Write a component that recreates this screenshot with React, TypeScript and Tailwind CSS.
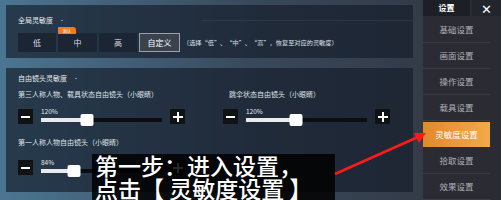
import React from "react";

const FONT = { fontFamily: '"Noto Sans CJK SC", "Noto Sans", sans-serif' };

function Slider({ value, ratio }: { value: string; ratio: number }) {
  return (
    <div className="flex h-[15px] items-center gap-[8px]">
      <div className="flex h-[15px] w-[15px] items-center justify-center bg-[#111214]">
        <div className="h-[2px] w-[9px] bg-white" />
      </div>
      <div className="relative h-[15px] w-[121px]">
        <span className="absolute -top-[2px] left-0 text-[6.5px] leading-[8px] text-[#e6e8ea]">{value}</span>
        <div className="absolute top-[9px] left-0 h-[4px] w-full bg-[#0c0d10]">
          <div className="h-full bg-[#e9eaec]" style={{ width: `${ratio * 100}%` }} />
        </div>
        <div
          className="absolute top-[5px] h-[12px] w-[13px] -translate-x-1/2 rounded-[2px] bg-white"
          style={{ left: `${ratio * 100}%` }}
        />
      </div>
      <div className="relative flex h-[15px] w-[15px] items-center justify-center bg-[#111214]">
        <div className="h-[2px] w-[10px] bg-white" />
        <div className="absolute h-[10px] w-[2px] bg-white" />
      </div>
    </div>
  );
}

const sideItems = ["基础设置", "画面设置", "操作设置", "载具设置", "灵敏度设置", "拾取设置", "效果设置"];

export default function App() {
  return (
    <div
      className="relative flex h-[200px] w-[501px] overflow-hidden bg-linear-to-r from-[#4b7691] via-[#38495c] to-[#31343f]"
      style={FONT}
    >
      {/* main content */}
      <div className="flex w-[423px] flex-col gap-[10px] pt-[5px] pl-[6px]">
        <div className="relative h-[53px] w-[407px] bg-[#141c29]/65 pt-[11px] pl-[12px]">
          <div className="flex items-center gap-[8px]">
            <span className="text-[7px] leading-[8px] text-[#e8eaec]">全局灵敏度</span>
            <span className="h-[1px] w-[2px] bg-[#8a93a0]" />
            <div className="ml-[130px] h-[1px] flex-1 bg-[#ffffff]/6" />
          </div>
          <div className="mt-[9px] flex items-center gap-[2px]">
            <div className="flex h-[19px] w-[38px] items-center justify-center bg-[#1b2534] text-[8px] text-[#d8dce2]">低</div>
            <div className="relative flex h-[19px] w-[39px] items-center justify-center bg-[#1b2534] text-[8px] text-[#d8dce2]">
              中
              <span className="absolute -top-[6px] left-0 flex h-[7px] w-[18px] items-center justify-center rounded-tr-[3px] bg-[#f07a1c] text-[4px] leading-none text-white">
                默认
              </span>
            </div>
            <div className="flex h-[19px] w-[38px] items-center justify-center bg-[#1b2534] text-[8px] text-[#d8dce2]">高</div>
            <div className="flex h-[19px] w-[41px] items-center justify-center border border-[#9aa0a8] bg-[#3a424e] text-[8px] text-white">
              自定义
            </div>
            <span className="ml-[1px] text-[6.2px] leading-[8px] text-[#dfe2e6]">
              （选择“低”、“中”、“高”，恢复至对应的灵敏度）
            </span>
          </div>
        </div>

        <div className="h-[124px] w-[407px] bg-[#141c29]/65 pt-[6px] pl-[12px]">
          <div className="flex items-center gap-[8px]">
            <span className="text-[7px] leading-[8px] text-[#e8eaec]">自由镜头灵敏度</span>
            <span className="h-[1px] w-[2px] bg-[#8a93a0]" />
          </div>
          <div className="mt-[8px] grid grid-cols-[205px_1fr]">
            <div className="flex flex-col">
              <span className="text-[7px] leading-[8px] text-[#dfe2e6]">第三人称人物、载具状态自由镜头（小眼睛）</span>
              <div className="mt-[11px]">
                <Slider value="120%" ratio={0.38} />
              </div>
            </div>
            <div className="flex flex-col">
              <span className="pl-[6px] text-[7px] leading-[8px] text-[#dfe2e6]">跳伞状态自由镜头（小眼睛）</span>
              <div className="mt-[11px]">
                <Slider value="120%" ratio={0.41} />
              </div>
            </div>
          </div>
          <div className="mt-[14px] flex flex-col">
            <span className="text-[7px] leading-[8px] text-[#dfe2e6]">第一人称人物自由镜头（小眼睛）</span>
            <div className="mt-[14px]">
              <Slider value="84%" ratio={0.27} />
            </div>
          </div>
        </div>
      </div>

      {/* sidebar */}
      <div className="flex w-[78px] flex-col bg-[#2a2b33]">
        <div className="flex h-[16px] gap-[2px]">
          <div className="flex w-[47px] items-center justify-center bg-[#1d1f26] text-[8px] font-bold text-white">设置</div>
          <div className="flex flex-1 items-center justify-center bg-[#23252c] text-[13px] leading-none text-white">✕</div>
        </div>
        <div className="flex w-[67px] flex-col pt-[1px]">
          {sideItems.map((item) =>
            item === "灵敏度设置" ? (
              <div
                key={item}
                className="my-[1px] flex h-[25px] items-center justify-center bg-linear-to-r from-[#e08a2c] to-[#f2a94a] text-[8.5px] text-white"
              >
                {item}
              </div>
            ) : (
              <div
                key={item}
                className="flex h-[26px] items-center justify-center border-b border-[#383a42] text-[8.5px] text-[#b0b3ba]"
              >
                {item}
              </div>
            )
          )}
        </div>
      </div>

      {/* annotation */}
      <div className="absolute top-[154px] left-[92px] h-[46px] w-[243px] overflow-hidden bg-black/85 pl-[3px] text-[23px] leading-[23px] font-medium whitespace-nowrap text-white">
        <div>第一步：进入设置，</div>
        <div>点击【 灵敏度设置 】</div>
      </div>
      <svg className="pointer-events-none absolute inset-0" width="501" height="200" viewBox="0 0 501 200">
        <line x1="335" y1="174" x2="418" y2="137" stroke="#ff1a1a" strokeWidth="2.5" />
        <polygon points="426,133 414,133 419,143" fill="#ff1a1a" />
      </svg>
    </div>
  );
}
